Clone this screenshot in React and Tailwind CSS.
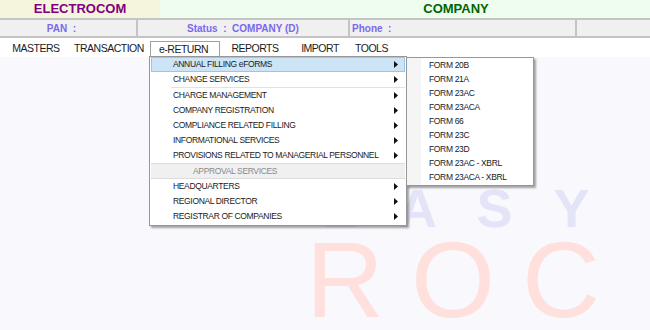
const mainItems = [
    { label: 'ANNUAL FILLING eFORMS', active: true },
    { label: 'CHANGE SERVICES', sepAfter: true },
    { label: 'CHARGE MANAGEMENT' },
    { label: 'COMPANY REGISTRATION' },
    { label: 'COMPLIANCE RELATED FILLING' },
    { label: 'INFORMATIONAL SERVICES' },
    { label: 'PROVISIONS RELATED TO MANAGERIAL PERSONNEL' },
];

const lowerItems = ['HEADQUARTERS', 'REGIONAL DIRECTOR', 'REGISTRAR OF COMPANIES'];

const forms = [
    'FORM 20B',
    'FORM 21A',
    'FORM 23AC',
    'FORM 23ACA',
    'FORM 66',
    'FORM 23C',
    'FORM 23D',
    'FORM 23AC - XBRL',
    'FORM 23ACA - XBRL',
];

function Arrow() {
    return (
        <svg width="4" height="7" viewBox="0 0 4 7" className="mr-[6px] shrink-0">
            <polygon points="0,0 4,3.5 0,7" fill="#111" />
        </svg>
    );
}

function MenuRow({ label, active }) {
    return (
        <div
            className={
                'flex h-[15px] items-center justify-between pl-[21px] ' +
                (active ? 'border border-[#99c6ec] bg-[#cde4f7]' : 'border border-transparent')
            }
        >
            <span>{label}</span>
            <Arrow />
        </div>
    );
}

export default function App() {
    return (
        <div
            className="relative flex h-[330px] w-[650px] flex-col overflow-hidden bg-[#f8f8fd]"
            style={{ fontFamily: '"Liberation Sans", Arial, sans-serif' }}
        >
            {/* titre */}
            <div className="flex h-[18px] shrink-0 text-[13px] font-bold leading-[18px]">
                <div className="flex w-[160px] justify-center bg-[#f5f4dc] text-[#800080]">
                    ELECTROCOM
                </div>
                <div className="flex flex-1 justify-center bg-[#effdef] pl-[102px] text-[#006400]">
                    COMPANY
                </div>
            </div>

            {/* infos */}
            <div className="flex h-[20px] shrink-0 border-y-2 border-[#c4c4c4] bg-[#f0f0f0] text-[10px] font-bold leading-[17px] text-[#7b68ee]">
                <div className="flex w-[136px] justify-center pr-[13px] whitespace-pre">PAN  :</div>
                <div className="flex w-[212px] justify-center border-l-2 border-[#c4c4c4] whitespace-pre">
                    Status  :  COMPANY (D)
                </div>
                <div className="w-[227px] border-l-2 border-[#c4c4c4] pl-[2px] whitespace-pre">Phone  :</div>
                <div className="flex-1 border-l-2 border-[#c4c4c4]"></div>
            </div>

            {/* menu */}
            <div className="flex h-[19px] shrink-0 items-end bg-white pl-[4px] text-[10.5px] tracking-[-0.5px] text-[#1a1a1a]">
                <div className="flex h-[16px] w-[64px] items-center justify-center">MASTERS</div>
                <div className="flex h-[16px] w-[82px] items-center justify-center">TRANSACTION</div>
                <div className="flex h-[16px] w-[70px] items-center border-x border-t border-[#a0a0a0] pl-[8px]">
                    e-RETURN
                </div>
                <div className="flex h-[16px] w-[70px] items-center justify-center">REPORTS</div>
                <div className="flex h-[16px] w-[60px] items-center justify-center">IMPORT</div>
                <div className="flex h-[16px] w-[43px] items-center justify-center">TOOLS</div>
            </div>

            {/* filigrane */}
            <div className="flex flex-col leading-none select-none">
                <div className="mt-[124px] flex h-[54px] pl-[302px] text-[54px] font-bold leading-[54px] text-[#e4e4f8]">
                    {['E', 'A', 'S', 'Y'].map((c) => (
                        <span key={c} className="w-[77px] text-center">{c}</span>
                    ))}
                </div>
                <div className="mt-[-9px] flex h-[104px] pl-[291px] text-[108px] leading-[108px] text-[#ffe0dc]">
                    {['R', 'O', 'C'].map((c) => (
                        <span key={c} className="w-[108px] text-center">{c}</span>
                    ))}
                </div>
            </div>

            {/* menu déroulant e-RETURN */}
            <div className="absolute left-[149px] top-[56px] w-[258px] border border-[#979797] bg-white px-[1px] pb-[1px] text-[8.5px] tracking-[-0.35px] text-[#1a1a1a] shadow-[2px_2px_2px_rgba(0,0,0,0.35)]">
                {mainItems.map((item) => (
                    <div key={item.label}>
                        <MenuRow label={item.label} active={item.active} />
                        {item.sepAfter && <div className="ml-[20px] h-px bg-[#e2e2e2]"></div>}
                    </div>
                ))}
                <div className="border-y border-[#dcdcdc] bg-[#f0f0f0]">
                    <div className="flex h-[14px] items-center pl-[42px] text-[#8a8a8a]">APPROVAL SERVICES</div>
                </div>
                {lowerItems.map((label) => (
                    <MenuRow key={label} label={label} />
                ))}
            </div>

            {/* sous-menu */}
            <div className="absolute left-[406px] top-[57px] flex w-[128px] border border-[#979797] bg-white text-[8.5px] tracking-[-0.35px] text-[#1a1a1a] shadow-[2px_2px_2px_rgba(0,0,0,0.35)]">
                <div className="w-[14px] bg-[#f5f5f5]"></div>
                <div className="flex-1 pb-[1px]">
                    {forms.map((f) => (
                        <div key={f} className="flex h-[14px] items-center pl-[8px]">{f}</div>
                    ))}
                </div>
            </div>
        </div>
    );
}
